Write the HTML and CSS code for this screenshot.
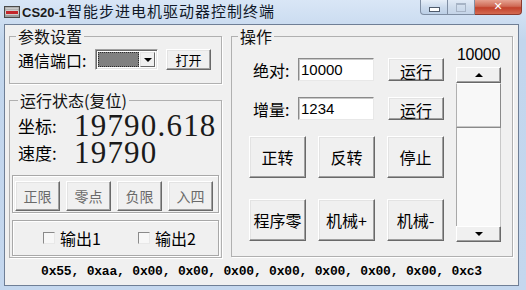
FILE: index.html
```html
<!DOCTYPE html>
<html lang="zh">
    <head>
        <meta charset="utf-8">
        <title>CS20-1</title>
        <link rel="stylesheet" href="styles.css">
    </head>
    <body>
        <div class="window">
            <div class="titlebar">
                <svg class="app-icon" width="16" height="12" viewBox="0 0 16 12">
                    <rect x="0.5" y="0.5" width="15" height="11" fill="#9b9b9b" stroke="#4a4a4a"/>
                    <rect x="1.5" y="1.5" width="13" height="2" fill="#c9c9c9"/>
                    <rect x="1.5" y="4.5" width="13" height="4" fill="#fff"/>
                    <rect x="2" y="5" width="12" height="3" fill="#c3262b"/>
                </svg>
                <span class="title"><b>CS20-1</b>智能步进电机驱动器控制终端</span>
                <div class="caption-btns">
                    <span class="cap cap-min"><i></i></span>
                    <span class="cap cap-max"><i></i></span>
                    <span class="cap cap-close">&#x2715;</span>
                </div>
            </div>

            <div class="client">
                <div class="panels">
                    <div class="left-col">
                        <fieldset class="group params">
                            <legend>参数设置</legend>
                            <div class="port-row">
                                <span class="lbl">通信端口:</span>
                                <div class="combo">
                                    <span class="combo-field"></span>
                                    <span class="combo-arrow"><i class="tri-down"></i></span>
                                </div>
                                <button class="btn btn-open">打开</button>
                            </div>
                        </fieldset>

                        <fieldset class="group status">
                            <legend>运行状态(复位)</legend>
                            <div class="stat first"><span class="stat-lbl">坐标:</span><span class="stat-val">19790.618</span></div>
                            <div class="stat"><span class="stat-lbl">速度:</span><span class="stat-val">19790</span></div>
                            <div class="box limits">
                                <button class="btn btn-limit">正限</button>
                                <button class="btn btn-limit">零点</button>
                                <button class="btn btn-limit">负限</button>
                                <button class="btn btn-limit">入四</button>
                            </div>
                            <div class="box outputs">
                                <label class="check"><span class="check-box"></span>输出1</label>
                                <label class="check"><span class="check-box"></span>输出2</label>
                            </div>
                        </fieldset>
                    </div>

                    <fieldset class="group ops">
                        <legend>操作</legend>
                        <div class="op-body">
                            <div class="op-main">
                                <div class="op-row first">
                                    <span class="op-lbl">绝对:</span>
                                    <input class="field" type="text" value="10000">
                                    <button class="btn btn-run">运行</button>
                                </div>
                                <div class="op-row">
                                    <span class="op-lbl">增量:</span>
                                    <input class="field" type="text" value="1234">
                                    <button class="btn btn-run">运行</button>
                                </div>
                                <div class="big-row first">
                                    <button class="btn btn-big">正转</button>
                                    <button class="btn btn-big">反转</button>
                                    <button class="btn btn-big">停止</button>
                                </div>
                                <div class="big-row">
                                    <button class="btn btn-big">程序零</button>
                                    <button class="btn btn-big">机械+</button>
                                    <button class="btn btn-big">机械-</button>
                                </div>
                            </div>
                            <div class="slider">
                                <div class="slider-val">10000</div>
                                <div class="scroll">
                                    <span class="sc-btn"><i class="tri-up"></i></span>
                                    <span class="sc-thumb"></span>
                                    <span class="sc-track"></span>
                                    <span class="sc-btn"><i class="tri-down"></i></span>
                                </div>
                            </div>
                        </div>
                    </fieldset>
                </div>

                <div class="bytes">0x55, 0xaa, 0x00, 0x00, 0x00, 0x00, 0x00, 0x00, 0x00, 0xc3</div>
            </div>
        </div>
    </body>
</html>
```

FILE: styles.css
```css
body{
    margin: 0;
    background: #c4d7ee;
    font-family: "Noto Sans CJK SC", "Liberation Sans", sans-serif;
    color: #000;
}
.window{
    width: 526px;
    height: 290px;
    box-sizing: border-box;
    padding: 0 7px 4px 4px;
    background: linear-gradient(#d9e6f6, #c2d6ed 40px, #c4d7ee);
    display: flex;
    flex-direction: column;
}

/* title bar */
.titlebar{
    height: 24px;
    display: flex;
    align-items: center;
    flex-shrink: 0;
}
.app-icon{
    display: block;
    margin-right: 2px;
}
.title{
    font-size: 15px;
    letter-spacing: 1px;
    color: #101828;
    line-height: 16px;
}
.title b{
    font-family: "Liberation Sans", sans-serif;
    font-size: 13px;
    letter-spacing: 0;
    color: #1b1b1b;
    margin-right: 1px;
}
.caption-btns{
    margin-left: auto;
    margin-right: -3px;
    align-self: flex-start;
    display: flex;
}
.cap{
    height: 15px;
    box-sizing: border-box;
    display: flex;
    align-items: center;
    justify-content: center;
    border: 1px solid #7f8ea3;
    border-top: none;
}
.cap-min{
    width: 28px;
    border-radius: 0 0 0 4px;
    background: linear-gradient(#e6eef8, #cbdaec 50%, #bccfe6);
}
.cap-min i{
    width: 9px;
    height: 3px;
    margin-top: 4px;
    background: #fff;
    border: 1px solid #4f5b6c;
}
.cap-max{
    width: 27px;
    border-left: none;
    background: linear-gradient(#e1eaf6, #cfdcec 50%, #c4d4e8);
}
.cap-max i{
    width: 8px;
    height: 6px;
    border: 1px solid #a7b4c6;
    border-top-width: 2px;
}
.cap-close{
    width: 47px;
    border-left: none;
    border-color: #8c3a2e;
    border-radius: 0 0 4px 0;
    background: linear-gradient(#e6a392, #cf6a55 45%, #c2412b 55%, #d46a52);
    color: #fff;
    font-family: "DejaVu Sans", sans-serif;
    font-weight: bold;
    font-size: 11px;
    line-height: 14px;
}

/* client area */
.client{
    flex: 1;
    background: #f0f0f0;
    border: 1px solid #6f7f96;
    padding: 3px 0 0 4px;
    display: flex;
    flex-direction: column;
}
.panels{
    display: flex;
    gap: 9px;
}
.left-col{
    width: 213px;
    display: flex;
    flex-direction: column;
}
.group{
    margin: 0;
    padding: 0;
    min-width: 0;
    box-sizing: border-box;
    border: 1px solid #b0b0b0;
    box-shadow: 1px 1px 0 #fff;
}
.group legend{
    margin-left: 6px;
    padding: 0 2px;
    font-size: 16px;
    line-height: 16px;
    color: #111;
}
.params{
    height: 56px;
    margin-bottom: 8px;
}
.port-row{
    display: flex;
    align-items: center;
    margin-top: 5px;
    padding-left: 8px;
    height: 21px;
}
.lbl{
    font-size: 16px;
    width: 77px;
}
.combo{
    width: 63px;
    height: 21px;
    box-sizing: border-box;
    border: 1px solid;
    border-color: #a0a0a0 #fff #fff #a0a0a0;
    box-shadow: inset 1px 1px #696969, inset -1px -1px #e3e3e3;
    background: #fff;
    display: flex;
    padding: 2px;
}
.combo-field{
    flex: 1;
    background: #808080;
    outline: 1px dotted #2b2b2b;
    outline-offset: -1px;
    margin-right: 1px;
}
.combo-arrow{
    width: 15px;
    box-sizing: border-box;
    background: #f0f0f0;
    border: 1px solid;
    border-color: #e3e3e3 #696969 #696969 #e3e3e3;
    display: flex;
    align-items: center;
    justify-content: center;
}
.tri-down{
    width: 0;
    height: 0;
    border-left: 4px solid transparent;
    border-right: 4px solid transparent;
    border-top: 4px solid #000;
}
.tri-up{
    width: 0;
    height: 0;
    border-left: 4px solid transparent;
    border-right: 4px solid transparent;
    border-bottom: 4px solid #000;
}

.btn{
    background: #f0f0f0;
    border: 1px solid;
    border-color: #fff #696969 #696969 #fff;
    box-shadow: inset -1px -1px #a0a0a0, inset 1px 1px #e3e3e3;
    padding: 0;
    font-family: "Noto Sans CJK SC", "Liberation Sans", sans-serif;
    color: #000;
    box-sizing: border-box;
}
.btn-open{
    width: 45px;
    height: 21px;
    margin-left: 8px;
    font-size: 13px;
}

/* status */
.status{
    height: 166px;
    padding: 0 2px 1px 2px;
}
.stat{
    display: flex;
    align-items: center;
    height: 27px;
}
.stat.first{
    margin-top: 4px;
}
.stat-lbl{
    width: 56px;
    padding-left: 6px;
    font-size: 17px;
    line-height: 27px;
}
.stat-val{
    font-family: "Liberation Serif", serif;
    font-size: 31px;
    line-height: 27px;
    letter-spacing: 1.2px;
    color: #1a1a1a;
}
.box{
    border: 1px solid #a8a8a8;
    box-shadow: inset 1px 1px #fff, 1px 1px #fff;
    box-sizing: border-box;
}
.limits{
    margin-top: 9px;
    height: 38px;
    display: flex;
    gap: 6px;
    padding: 5px 0 0 2px;
}
.btn-limit{
    width: 45px;
    height: 30px;
    font-size: 14px;
    color: #6a6a6a;
}
.outputs{
    margin-top: 7px;
    height: 36px;
    display: flex;
    align-items: center;
    padding-left: 30px;
    gap: 37px;
}
.check{
    display: flex;
    align-items: center;
    font-size: 16px;
    gap: 5px;
}
.check-box{
    width: 12px;
    height: 12px;
    box-sizing: border-box;
    border: 1px solid;
    border-color: #8a8a8a #e8e8e8 #e8e8e8 #8a8a8a;
    background: #f7f7f7;
}

/* operations */
.ops{
    width: 282px;
    height: 229px;
}
.op-body{
    display: flex;
    padding-left: 17px;
}
.op-row{
    display: flex;
    align-items: center;
    height: 23px;
    margin-top: 16px;
}
.op-row.first{
    margin-top: 14px;
}
.op-lbl{
    width: 45px;
    padding-left: 4px;
    font-size: 16px;
}
.field{
    width: 76px;
    height: 23px;
    box-sizing: border-box;
    margin: 0 14px 0 0;
    padding: 0 0 0 2px;
    border: 1px solid;
    border-color: #8a8a8a #e8e8e8 #e8e8e8 #8a8a8a;
    box-shadow: inset 1px 1px #c8c8c8;
    background: #fff;
    font-family: "Liberation Sans", sans-serif;
    font-size: 15px;
    color: #000;
}
.btn-run{
    width: 56px;
    height: 23px;
    font-size: 16px;
}
.big-row{
    display: flex;
    gap: 12px;
    margin-top: 21px;
}
.big-row.first{
    margin-top: 16px;
}
.btn-big{
    width: 57px;
    height: 42px;
    font-size: 16px;
}
.slider{
    margin-left: 12px;
    width: 45px;
}
.slider-val{
    margin-top: 3px;
    font-family: "Liberation Sans", sans-serif;
    font-size: 16px;
    line-height: 16px;
    text-align: center;
    letter-spacing: -0.3px;
}
.scroll{
    margin-top: 4px;
    height: 175px;
    display: flex;
    flex-direction: column;
}
.sc-btn{
    height: 16px;
    box-sizing: border-box;
    background: #f0f0f0;
    border: 1px solid;
    border-color: #fff #696969 #696969 #fff;
    box-shadow: inset -1px -1px #a0a0a0;
    display: flex;
    align-items: center;
    justify-content: center;
}
.sc-thumb{
    height: 45px;
    box-sizing: border-box;
    background: #f8f8f8;
    border: 1px solid;
    border-color: #fff #8a8a8a #8a8a8a #b0b0b0;
    box-shadow: inset 0 -1px #c8c8c8;
}
.sc-track{
    flex: 1;
    background: #f9f9f9;
    border-left: 1px solid #a8a8a8;
    border-right: 1px solid #c8c8c8;
}

.bytes{
    margin-top: 6px;
    text-align: center;
    font-family: "Liberation Mono", monospace;
    font-weight: bold;
    font-size: 13px;
    line-height: 16px;
    letter-spacing: -0.2px;
    padding-right: 4px;
}
```
